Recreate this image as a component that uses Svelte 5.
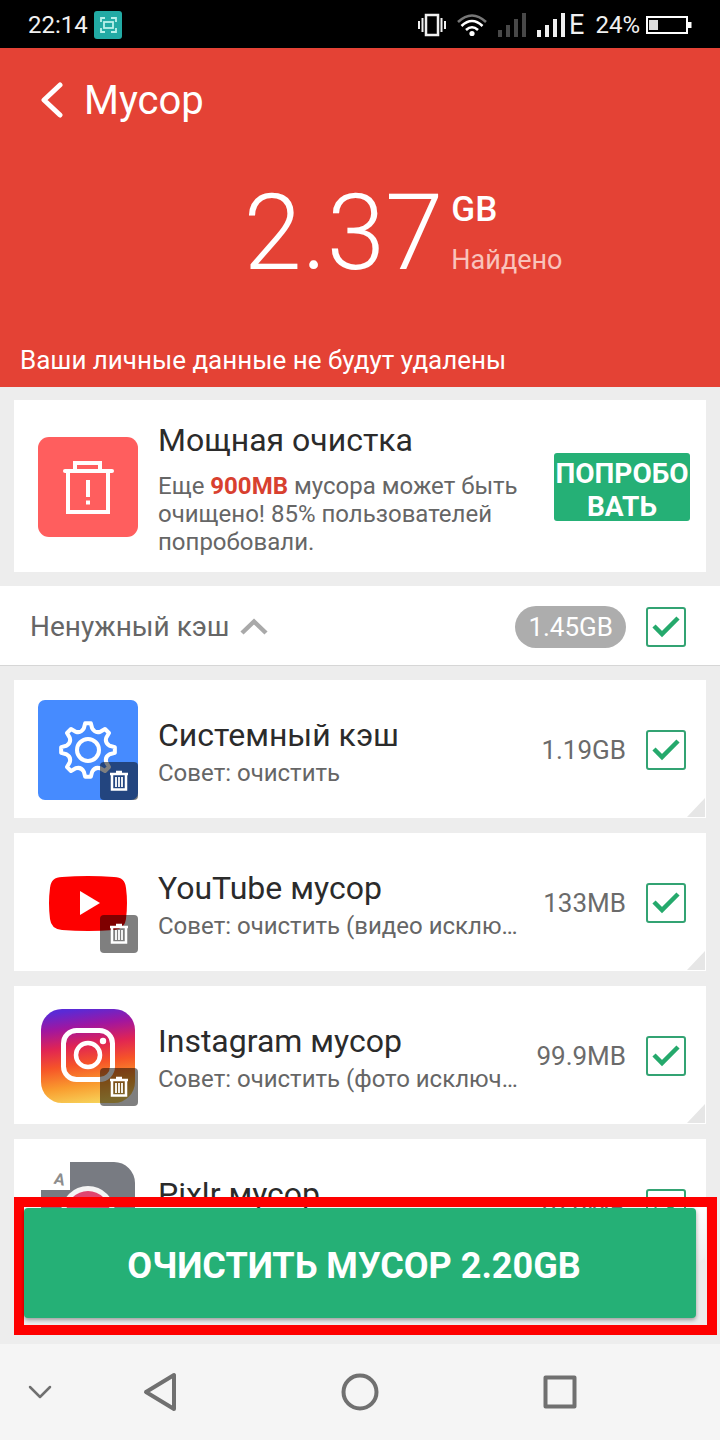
<script lang="ts">
	type IconName = 'system' | 'youtube' | 'instagram' | 'pixlr';

	type JunkItem = {
		icon: IconName;
		name: string;
		hint: string;
		size: string;
		checked: boolean;
	};

	let items: JunkItem[] = $state([
		{ icon: 'system', name: 'Системный кэш', hint: 'Совет: очистить', size: '1.19GB', checked: true },
		{
			icon: 'youtube',
			name: 'YouTube мусор',
			hint: 'Совет: очистить (видео исключены)',
			size: '133MB',
			checked: true
		},
		{
			icon: 'instagram',
			name: 'Instagram мусор',
			hint: 'Совет: очистить (фото исключены)',
			size: '99.9MB',
			checked: true
		},
		{ icon: 'pixlr', name: 'Pixlr мусор', hint: 'Совет: очистить', size: '19.9MB', checked: true }
	]);

	let expanded = $state(true);
	const allChecked = $derived(items.every((item) => item.checked));

	function toggleAll() {
		const next = !allChecked;
		for (const item of items) item.checked = next;
	}

	function polar(r: number, deg: number) {
		const a = (deg * Math.PI) / 180;
		return `${(50 + r * Math.sin(a)).toFixed(2)} ${(50 - r * Math.cos(a)).toFixed(2)}`;
	}

	// eight teeth with a rounded scoop between each pair
	function gearPath() {
		let d = '';
		for (let i = 0; i < 8; i++) {
			const a = i * 45;
			d += `${i ? 'L' : 'M'}${polar(27, a - 6)} L${polar(27, a + 6)} L${polar(22, a + 11)} `;
			d += `Q${polar(18, a + 22.5)} ${polar(22, a + 34)} `;
		}
		return d + 'Z';
	}
</script>

{#snippet tick()}
	<svg class="tick" viewBox="0 0 40 40" aria-hidden="true">
		<path d="M8 19l8 8 16-16" fill="none" stroke="#25a96c" stroke-width="4.5" />
	</svg>
{/snippet}

{#snippet bars()}
	<svg width="28" height="24" viewBox="0 0 28 24" fill="currentColor" aria-hidden="true">
		<path d="M0 17h4v7H0zM8 12h4v12H8zM16 6h4v18h-4zM24 0h4v24h-4z" />
	</svg>
{/snippet}

{#snippet appIcon(name: IconName)}
	<svg width="100" height="100" viewBox="0 0 100 100" fill="none" aria-hidden="true">
		{#if name === 'system'}
			<rect width="100" height="100" rx="7" fill="#468bff" />
			<path d={gearPath()} stroke="#fff" stroke-width="4" stroke-linejoin="round" />
			<circle cx="50" cy="50" r="11" stroke="#fff" stroke-width="4" />
		{:else if name === 'youtube'}
			<path
				d="M24 24Q50 22 76 24Q87 24 88 35Q90 50 88 66Q87 76 76 77Q50 79 24 77Q13 76 12 66Q10 50 12 35Q13 24 24 24Z"
				fill="#fe0000"
			/>
			<path d="M42 38l20 12-20 12z" fill="#fff" />
		{:else if name === 'instagram'}
			<defs>
				<linearGradient id="insta" x1="0.42" y1="0" x2="0.56" y2="1">
					<stop offset="0" stop-color="#5a2ad6" />
					<stop offset="0.18" stop-color="#a016a0" />
					<stop offset="0.38" stop-color="#e02454" />
					<stop offset="0.58" stop-color="#f65428" />
					<stop offset="0.8" stop-color="#f99b2e" />
					<stop offset="1" stop-color="#f7d158" />
				</linearGradient>
			</defs>
			<rect x="3" y="3" width="94" height="94" rx="21" fill="url(#insta)" />
			<rect x="25.5" y="24.5" width="49" height="49" rx="13" stroke="#fff" stroke-width="5" />
			<circle cx="50" cy="49" r="12" stroke="#fff" stroke-width="4.5" />
			<circle cx="65" cy="35" r="3.2" fill="#fff" />
		{:else}
			<path d="M32 3h44a21 21 0 0 1 21 21v73H3V31h29z" fill="#787b82" />
			<circle cx="50" cy="54" r="27" fill="#f4f4f4" />
			<circle cx="50" cy="54" r="22" fill="#e0456f" />
			<text x="16" y="26" font-size="16" font-weight="700" fill="#8d8d8d" transform="rotate(12 23 22)">A</text>
		{/if}
	</svg>
{/snippet}

<div class="screen">
	<div class="status">
		<span>22:14</span>
		<svg width="28" height="28" viewBox="0 0 28 28" fill="none" aria-hidden="true">
			<rect width="28" height="28" rx="3" fill="#22aaa4" />
			<g stroke="#b9f1ea" stroke-width="1.8">
				<path d="M7 11V7h4M17 7h5v4M22 17v4h-5M11 21H7v-4" />
				<rect x="10" y="11" width="9" height="6" />
			</g>
		</svg>
		<div class="status-right">
			<svg width="28" height="24" viewBox="0 0 28 24" fill="none" stroke="#f0f0f0" aria-hidden="true">
				<rect x="8" y="2" width="12" height="20" stroke-width="2.5" />
				<path d="M4.5 5v14M23.5 5v14M1 8v8M27 8v8" stroke-width="2" />
			</svg>
			<svg width="30" height="24" viewBox="0 0 30 24" fill="none" stroke-width="2.6" aria-hidden="true">
				<path d="M1 9q14-13 28 0" stroke="#777" />
				<path d="M4.5 13q10.5-10 21 0M9 17q6-5.5 12 0" stroke="#fff" />
				<circle cx="15" cy="20.5" r="2.6" fill="#fff" />
			</svg>
			<span class="bars dim">{@render bars()}</span>
			<span class="bars">{@render bars()}<span class="net">E</span></span>
			<span class="battery">
				24%
				<svg width="46" height="18" viewBox="0 0 46 18" fill="none" aria-hidden="true">
					<rect x="1" y="1" width="40" height="16" stroke="#fff" stroke-width="2" />
					<rect x="3" y="4" width="9" height="10" fill="#ddd" />
					<path d="M42 6h3.5v6H42z" fill="#fff" />
				</svg>
			</span>
		</div>
	</div>

	<header class="summary">
		<div class="bar">
			<button class="back" aria-label="Назад">
				<svg width="22" height="36" viewBox="0 0 22 36" fill="none" aria-hidden="true">
					<path d="M19 3L3 18l16 15" stroke="#fff" stroke-width="5" stroke-linecap="round" stroke-linejoin="round" />
				</svg>
			</button>
			<h1>Мусор</h1>
		</div>
		<div class="total">
			<span class="number">2.37</span>
			<div class="unit">
				<strong>GB</strong>
				<span>Найдено</span>
			</div>
		</div>
		<p class="note">Ваши личные данные не будут удалены</p>
	</header>

	<main>
		<div class="scroll">
			<section class="card promo">
				<svg width="100" height="100" viewBox="0 0 100 100" fill="none" stroke="#fff" aria-hidden="true">
					<rect width="100" height="100" rx="11" fill="#ff5e5e" stroke="none" />
					<path d="M27 34h47" stroke-width="4" stroke-linecap="round" />
					<path d="M37 33v-7h25v7M30 35v40h40V35" stroke-width="4" />
					<path d="M50 43v17M50 63.5v4" stroke-width="4" />
				</svg>
				<div class="text">
					<h2>Мощная очистка</h2>
					<p>Еще <b>900MB</b> мусора может быть очищено! 85% пользователей попробовали.</p>
				</div>
				<button class="try">ПОПРОБОВАТЬ</button>
			</section>

			<div class="group">
				<button class="group-name" aria-expanded={expanded} onclick={() => (expanded = !expanded)}>
					Ненужный кэш
					<svg class:closed={!expanded} width="28" height="18" viewBox="0 0 28 18" fill="none" aria-hidden="true">
						<path d="M2 15L14 3.5 26 15" stroke="#a9a9a9" stroke-width="4.5" />
					</svg>
				</button>
				<span class="pill">1.45GB</span>
				<label class="check">
					<input type="checkbox" aria-label="Ненужный кэш" checked={allChecked} onchange={toggleAll} />
					{@render tick()}
				</label>
			</div>

			{#if expanded}
				<ul>
					{#each items as item (item.icon)}
						<li class="card item">
							<div class="icon">
								{@render appIcon(item.icon)}
								<span class="badge">
									<svg width="20" height="22" viewBox="0 0 20 22" fill="none" stroke="#fff" aria-hidden="true">
										<path d="M1 4h18M7 2h6" stroke-width="2.5" />
										<path d="M3 4v15.5h14V4" stroke-width="2.5" />
										<path d="M7 7v10M10 7v10M13 7v10" stroke-width="1.8" />
									</svg>
								</span>
							</div>
							<div class="text">
								<h2>{item.name}</h2>
								<p>{item.hint}</p>
							</div>
							<div class="item-end">
								<span class="size">{item.size}</span>
								<label class="check">
									<input type="checkbox" aria-label={item.name} bind:checked={item.checked} />
									{@render tick()}
								</label>
							</div>
						</li>
					{/each}
				</ul>
			{/if}
		</div>

		<div class="action">
			<button class="clean">ОЧИСТИТЬ МУСОР 2.20GB</button>
		</div>
	</main>

	<nav>
		<button aria-label="Скрыть панель">
			<svg width="24" height="16" viewBox="0 0 24 16" aria-hidden="true">
				<path d="M2 3l10 10L22 3" stroke-width="2.5" />
			</svg>
		</button>
		<button aria-label="Назад">
			<svg width="36" height="40" viewBox="0 0 36 40" aria-hidden="true">
				<path d="M32 3v34L4 20z" stroke-width="4" />
			</svg>
		</button>
		<button aria-label="Домой">
			<svg width="40" height="40" viewBox="0 0 40 40" aria-hidden="true">
				<circle cx="20" cy="20" r="16.5" stroke-width="4" />
			</svg>
		</button>
		<button aria-label="Недавние">
			<svg width="36" height="36" viewBox="0 0 36 36" aria-hidden="true">
				<rect x="3.5" y="3.5" width="29" height="29" stroke-width="4" />
			</svg>
		</button>
	</nav>
</div>

<style>
	:global(body) {
		margin: 0;
	}

	.screen {
		display: flex;
		flex-direction: column;
		height: 100vh;
		background: #ededed;
		font-family: Roboto, 'Noto Sans', sans-serif;
		color: #2b2b2b;
	}

	h1,
	h2,
	p,
	ul {
		margin: 0;
		padding: 0;
		font-weight: 400;
	}

	svg {
		display: block;
		flex: none;
	}

	button {
		border: 0;
		padding: 0;
		background: none;
		font: inherit;
		color: inherit;
		cursor: pointer;
	}

	.status {
		display: flex;
		flex: none;
		align-items: center;
		gap: 6px;
		height: 48px;
		padding: 2px 28px 0;
		box-sizing: border-box;
		background: #000;
		color: #f0f0f0;
		font-size: 24px;
	}

	.status-right {
		display: flex;
		align-items: center;
		gap: 11px;
		margin-left: auto;
	}

	.bars {
		display: flex;
		align-items: center;
		gap: 4px;

		&.dim {
			color: #484848;
		}
	}

	.net {
		font-size: 27px;
		line-height: 24px;
	}

	.battery {
		display: flex;
		align-items: center;
		gap: 6px;
	}

	.summary {
		flex: none;
		background: #e44235;
		color: #fff;
	}

	.bar {
		display: flex;
		align-items: center;
		gap: 21px;
		height: 104px;
		padding-left: 41px;

		& h1 {
			font-size: 40px;
		}
	}

	.total {
		display: flex;
		justify-content: center;
		gap: 8px;
		height: 180px;
		padding-left: 86px;
	}

	.number {
		font-size: 105px;
		font-weight: 300;
		line-height: 163px;
	}

	.unit {
		display: flex;
		flex-direction: column;
		padding-top: 36px;

		& strong {
			font-size: 35px;
			font-weight: 500;
			line-height: 44px;
		}

		& span {
			margin-top: 12px;
			font-size: 27px;
			line-height: 32px;
			color: #f9c3bc;
		}
	}

	.note {
		height: 55px;
		padding-left: 20px;
		font-size: 26px;
		line-height: 56px;
	}

	main {
		position: relative;
		flex: 1;
		min-height: 0;
	}

	.scroll {
		height: 100%;
		overflow: hidden;
	}

	.card {
		position: relative;
		display: flex;
		align-items: center;
		margin: 0 14px;
		background: #fff;
	}

	.text {
		flex: 1;
		min-width: 0;

		& h2 {
			font-size: 32px;
			line-height: 40px;
		}

		& p {
			font-size: 24px;
			color: #666;
		}
	}

	.promo {
		gap: 20px;
		margin-top: 13px;
		padding: 18px 16px 16px 24px;

		& .text {
			padding-top: 2px;
		}

		& p {
			margin-top: 12px;
			line-height: 28px;
		}

		& b {
			color: #d8402f;
		}
	}

	.try {
		width: 136px;
		height: 68px;
		padding-top: 4px;
		border-radius: 3px;
		background: #25b076;
		color: #fff;
		font-size: 28px;
		font-weight: 700;
		line-height: 33px;
		word-break: break-all;
	}

	.group {
		display: flex;
		align-items: center;
		gap: 20px;
		height: 80px;
		margin: 14px 0;
		padding: 2px 34px 0 30px;
		border-bottom: 1px solid #d6d6d6;
		box-sizing: border-box;
		background: #fff;
	}

	.group-name {
		display: flex;
		align-items: center;
		gap: 10px;
		margin-right: auto;
		font-size: 28px;
		color: #666;

		& .closed {
			transform: rotate(180deg);
		}
	}

	.pill {
		padding: 0 13px;
		border-radius: 21px;
		background: #adadad;
		color: #fff;
		font-size: 26px;
		line-height: 42px;
	}

	.check {
		display: grid;
		flex: none;
		width: 40px;
		height: 40px;
		cursor: pointer;

		& input,
		& .tick {
			grid-area: 1 / 1;
			width: 100%;
			height: 100%;
		}

		& input {
			appearance: none;
			margin: 0;
			border: 2px solid #33a373;
			border-radius: 3px;
			box-sizing: border-box;
		}

		& input:not(:checked) + .tick {
			visibility: hidden;
		}
	}

	.item {
		height: 138px;
		margin-bottom: 15px;
		padding: 2px 20px 0 24px;
		box-sizing: border-box;
		list-style: none;

		&::after {
			content: '';
			position: absolute;
			right: 1px;
			bottom: 1px;
			width: 18px;
			height: 19px;
			background: #e6e6e6;
			clip-path: polygon(100% 0, 100% 100%, 0 100%);
		}

		& .text {
			padding: 4px 16px 0 20px;
		}

		& p {
			margin-top: 2px;
			overflow: hidden;
			line-height: 32px;
			text-overflow: ellipsis;
			white-space: nowrap;
		}
	}

	.item-end {
		display: flex;
		align-items: center;
		gap: 20px;
	}

	.icon {
		position: relative;
	}

	.badge {
		position: absolute;
		right: 0;
		bottom: 0;
		display: grid;
		place-items: center;
		width: 38px;
		height: 38px;
		border-radius: 4px;
		background: rgba(0, 0, 0, 0.5);
	}

	.size {
		font-size: 26px;
		color: #6b6b6b;
	}

	.action {
		position: absolute;
		right: 3px;
		bottom: 9px;
		left: 14px;
		padding: 1px 11px 7px 0;
		border: 10px solid #fe0000;
		background: linear-gradient(transparent, #ededed 50%);
		background-clip: padding-box;
	}

	.clean {
		display: block;
		width: 100%;
		height: 110px;
		padding: 6px 12px 0 0;
		border-radius: 4px;
		background: #25b076;
		box-shadow: 0 2px 4px rgba(0, 0, 0, 0.35);
		color: #fff;
		font-size: 36px;
		font-weight: 700;
	}

	nav {
		display: grid;
		flex: none;
		grid-template-columns: 1fr 2fr 3fr 2fr 1fr;
		height: 96px;
		background: #f5f5f5;

		& button {
			display: grid;
			place-items: center;
		}

		& svg {
			fill: none;
			stroke: #707070;
			stroke-linecap: round;
			stroke-linejoin: round;
		}
	}
</style>
